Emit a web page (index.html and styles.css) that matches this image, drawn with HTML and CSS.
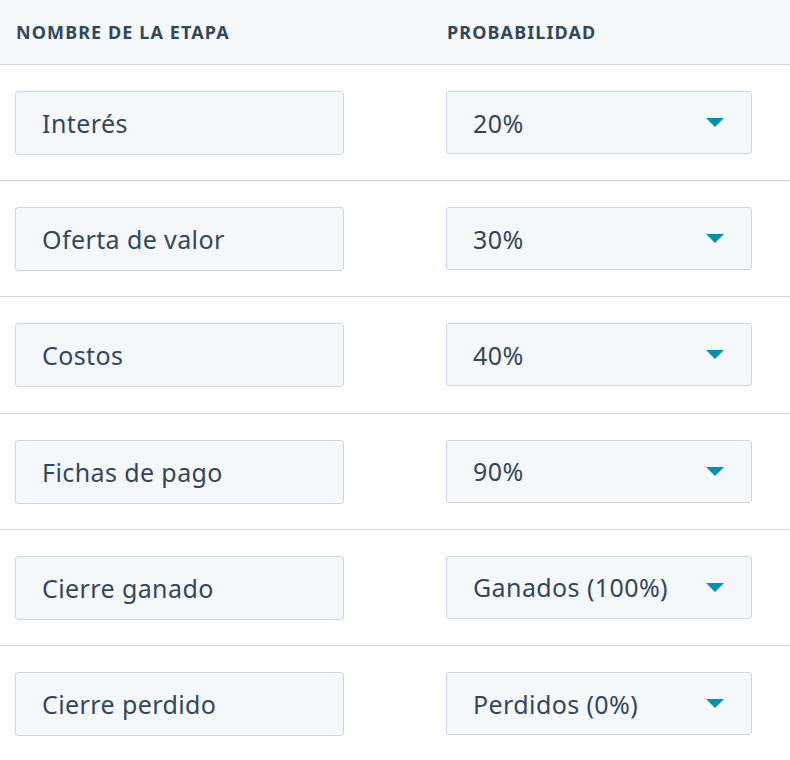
FILE: index.html
```html
<!DOCTYPE html>
<html>
  <head>
    <meta charset="utf-8">
    <meta name="viewport" content="width=device-width">
    <title>Etapas</title>
    <link rel="stylesheet" href="styles.css">
  </head>
  <body>
    <div class="stage-table">
      <div class="stage-head">
        <div class="col-name">Nombre de la etapa</div>
        <div class="col-prob">Probabilidad</div>
      </div>
      <div class="stage-row">
        <div class="stage-input">Interés</div>
        <div class="stage-select">20%<span class="caret"></span></div>
      </div>
      <div class="stage-row">
        <div class="stage-input">Oferta de valor</div>
        <div class="stage-select">30%<span class="caret"></span></div>
      </div>
      <div class="stage-row">
        <div class="stage-input">Costos</div>
        <div class="stage-select">40%<span class="caret"></span></div>
      </div>
      <div class="stage-row">
        <div class="stage-input">Fichas de pago</div>
        <div class="stage-select">90%<span class="caret"></span></div>
      </div>
      <div class="stage-row">
        <div class="stage-input">Cierre ganado</div>
        <div class="stage-select">Ganados (100%)<span class="caret"></span></div>
      </div>
      <div class="stage-row">
        <div class="stage-input">Cierre perdido</div>
        <div class="stage-select">Perdidos (0%)<span class="caret"></span></div>
      </div>
    </div>
  </body>
</html>
```
FILE: styles.css
```css
* {
  margin: 0;
  box-sizing: border-box;
}
body {
  color: #33475b;
  font-family: "Noto Sans", "Open Sans", sans-serif;
  background-color: white;
}
.stage-head {
  height: 65px;
  padding: 0 0 0 16px;
  display: grid;
  grid-template-columns: 431px 1fr;
  align-items: center;
  background-color: #f5f8fa;
  border-bottom: 1px solid #cbd6e2;
  font-size: 18px;
  font-weight: 700;
  text-transform: uppercase;
  letter-spacing: 1.1px;
}
.stage-row {
  height: 116px;
  padding: 26px 0 0 15px;
  display: grid;
  grid-template-columns: 431px 306px;
  align-items: start;
  border-bottom: 1px solid #cbd6e2;
}
.stage-row + .stage-row {
  height: 116.3px;
}
.stage-input,
.stage-select {
  height: 64px;
  display: flex;
  align-items: center;
  padding: 0 26px;
  background-color: #f5f8fa;
  border: 1px solid #cbd6e2;
  border-radius: 3px;
  font-size: 25px;
  letter-spacing: 0.4px;
}
.stage-input {
  width: 329px;
}
.stage-select {
  height: 63px;
  justify-content: space-between;
  padding-right: 27px;
}
.caret {
  width: 0;
  height: 0;
  border-left: 9px solid transparent;
  border-right: 9px solid transparent;
  border-top: 9px solid #0091ae;
}
```
